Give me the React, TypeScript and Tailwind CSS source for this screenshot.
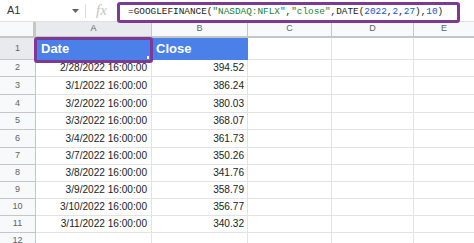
const rows = [
  { n: 2, date: '2/28/2022 16:00:00', close: '394.52', h: 'h-[17px]' },
  { n: 3, date: '3/1/2022 16:00:00', close: '386.24', h: 'h-[18px]' },
  { n: 4, date: '3/2/2022 16:00:00', close: '380.03', h: 'h-[18px]' },
  { n: 5, date: '3/3/2022 16:00:00', close: '368.07', h: 'h-[17px]' },
  { n: 6, date: '3/4/2022 16:00:00', close: '361.73', h: 'h-[18px]' },
  { n: 7, date: '3/7/2022 16:00:00', close: '350.26', h: 'h-[17px]' },
  { n: 8, date: '3/8/2022 16:00:00', close: '341.76', h: 'h-[17px]' },
  { n: 9, date: '3/9/2022 16:00:00', close: '358.79', h: 'h-[17px]' },
  { n: 10, date: '3/10/2022 16:00:00', close: '356.77', h: 'h-[17px]' },
  { n: 11, date: '3/11/2022 16:00:00', close: '340.32', h: 'h-[17px]' },
]

function Cells() {
  return (
    <>
      <div className="w-[84px] shrink-0 border-r border-b border-[#e2e3e3]" />
      <div className="w-[82px] shrink-0 border-r border-b border-[#e2e3e3]" />
      <div className="flex-1 border-b border-[#e2e3e3]" />
    </>
  )
}

export default function App() {
  return (
    <div className="relative w-[474px] h-[243px] overflow-hidden bg-white font-['Liberation_Sans',Arial,sans-serif] text-[#222]">
      {/* formula bar */}
      <div className="flex h-[22px] items-start border-b border-[#e0e0e0]">
        <div className="flex h-[21px] w-[85px] items-center justify-between pl-[7px] pr-[6px] text-[11px] text-[#333]">
          <span>A1</span>
          <svg width="7" height="4" viewBox="0 0 7 4" className="mt-[1px]">
            <path d="M0 0 L7 0 L3.5 4 Z" fill="#5f6368" />
          </svg>
        </div>
        <div className="mt-[4px] h-[14px] w-px bg-[#dadce0]" />
        <div className="flex h-[21px] w-[31px] items-center justify-center font-['Liberation_Serif',serif] text-[15px] italic text-[#c4c4c4]">
          fx
        </div>
        <div className="relative z-10 mt-[2px] flex h-[21px] w-[343px] items-center rounded-[3px] border-[3px] border-[#7d3a95] bg-white pl-[8px] font-['Liberation_Mono',monospace] text-[9.4px] text-[#222]">
          <span>
            =GOOGLEFINANCE(<span className="text-[#188038]">"NASDAQ:NFLX"</span>,
            <span className="text-[#188038]">"close"</span>,DATE(
            <span className="text-[#1155cc]">2022</span>,<span className="text-[#1155cc]">2</span>,
            <span className="text-[#1155cc]">27</span>),<span className="text-[#1155cc]">10</span>)
          </span>
        </div>
      </div>

      {/* column headers */}
      <div className="flex h-[16px] text-[9px] text-[#5f6368]">
        <div className="w-[36px] shrink-0 border-r-[3px] border-b-[2px] border-[#c4c7c5] bg-[#f8f9fa]" />
        <div className="flex w-[116px] shrink-0 items-center justify-center border-r border-b-[2px] border-[#c4c7c5] bg-[#e8eaed]">A</div>
        <div className="flex w-[96px] shrink-0 items-center justify-center border-r border-b-[2px] border-[#c4c7c5] bg-[#f8f9fa]">B</div>
        <div className="flex w-[84px] shrink-0 items-center justify-center border-r border-b-[2px] border-[#c4c7c5] bg-[#f8f9fa]">C</div>
        <div className="flex w-[82px] shrink-0 items-center justify-center border-r border-b-[2px] border-[#c4c7c5] bg-[#f8f9fa]">D</div>
        <div className="flex flex-1 items-center justify-center border-b-[2px] border-[#c4c7c5] bg-[#f8f9fa]">E</div>
      </div>

      {/* row 1 */}
      <div className="flex h-[22px]">
        <div className="flex w-[36px] shrink-0 items-center justify-center border-r border-b border-[#c4c7c5] bg-[#e8eaed] text-[9px] text-[#5f6368]">1</div>
        <div className="flex w-[116px] shrink-0 items-center bg-[#4a80e8] pl-[5px] text-[13px] font-bold text-white">Date</div>
        <div className="flex w-[96px] shrink-0 items-center bg-[#4a80e8] pl-[4px] text-[13px] font-bold text-white">Close</div>
        <Cells />
      </div>

      {rows.map((r) => (
        <div key={r.n} className={`flex ${r.h}`}>
          <div className="flex w-[36px] shrink-0 items-center justify-center border-r border-b border-[#c4c7c5] bg-[#f8f9fa] text-[9px] text-[#5f6368]">
            {r.n}
          </div>
          <div className="flex w-[116px] shrink-0 items-center justify-end border-r border-b border-[#e2e3e3] pr-[4px] text-[10.1px]">
            {r.date}
          </div>
          <div className="flex w-[96px] shrink-0 items-center justify-end border-r border-b border-[#e2e3e3] pr-[3px] text-[10.1px]">
            {r.close}
          </div>
          <Cells />
        </div>
      ))}

      <div className="flex h-[17px]">
        <div className="flex w-[36px] shrink-0 items-start justify-center border-r border-[#c4c7c5] bg-[#f8f9fa] pt-[3px] text-[9px] leading-[9px] text-[#5f6368]">12</div>
        <div className="w-[116px] shrink-0 border-r border-[#e2e3e3]" />
        <div className="w-[96px] shrink-0 border-r border-[#e2e3e3]" />
        <div className="w-[84px] shrink-0 border-r border-[#e2e3e3]" />
        <div className="w-[82px] shrink-0 border-r border-[#e2e3e3]" />
      </div>

      {/* highlight around A1 */}
      <div className="pointer-events-none absolute left-[34px] top-[37px] h-[26px] w-[119px] rounded-[3px] border-[3px] border-[#7d3a95]">
        <div className="absolute bottom-[1px] right-[1px] h-[3px] w-[2px] bg-white" />
      </div>
    </div>
  )
}
